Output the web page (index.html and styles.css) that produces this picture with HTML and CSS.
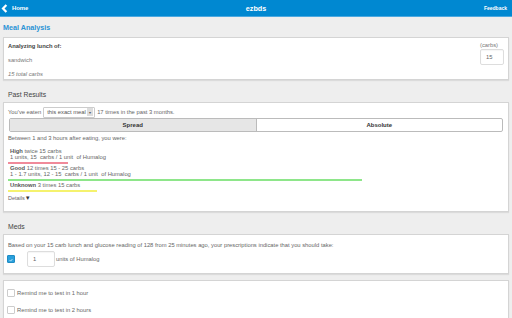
FILE: index.html
```html
<!DOCTYPE html>
<html>
<head>
<meta charset="utf-8">
<link rel="stylesheet" href="styles.css">
</head>
<body>
<header class="topbar">
  <a class="back"><svg class="chev" width="7" height="9" viewBox="0 0 7 9"><path d="M5.4 0.9 L2 4.5 L5.4 8.1" fill="none" stroke="#fff" stroke-width="2.2"/></svg>Home</a>
  <div class="title">ezbds</div>
  <a class="feedback">Feedback</a>
</header>
<main class="page">
  <h1 class="page-title">Meal Analysis</h1>
  <section class="card meal">
    <div class="meal-info">
      <div class="bold">Analyzing lunch of:</div>
      <div class="muted">sandwich</div>
      <div class="muted italic">15 total carbs</div>
    </div>
    <div class="carbs">
      <div class="muted">(carbs)</div>
      <div class="field carbs-field">15</div>
    </div>
  </section>

  <h2 class="section-title">Past Results</h2>
  <section class="card results">
    <div class="eaten">You've eaten <span class="select">this exact meal<span class="sel-arrow">&#9662;</span></span> 17 times in the past 3 months.</div>
    <div class="segmented">
      <div class="seg active">Spread</div>
      <div class="seg">Absolute</div>
    </div>
    <div class="between">Between 1 and 3 hours after eating, you were:</div>
    <div class="outcome first">
      <div><b>High</b> twice 15 carbs</div>
      <div>1 units, 15&nbsp; carbs / 1 unit&nbsp; of Humalog</div>
      <div class="bar red" style="width:60px"></div>
    </div>
    <div class="outcome">
      <div><b>Good</b> 12 times 15 - 25 carbs</div>
      <div>1 - 1.7 units, 12 - 15&nbsp; carbs / 1 unit&nbsp; of Humalog</div>
      <div class="bar green" style="width:354px"></div>
    </div>
    <div class="outcome">
      <div><b>Unknown</b> 3 times 15 carbs</div>
      <div class="bar yellow" style="width:89px"></div>
    </div>
    <div class="details">Details<span class="tri">&#9660;</span></div>
  </section>

  <h2 class="section-title">Meds</h2>
  <section class="card meds">
    <div class="based">Based on your 15 carb lunch and glucose reading of 128 from 25 minutes ago, your prescriptions indicate that you should take:</div>
    <div class="dose">
      <span class="check on"><svg width="8" height="8" viewBox="0 0 8 8"><path d="M2.2 4.2 L3.5 5.5 L5.8 2.8" fill="none" stroke="#fff" stroke-width="0.9"/></svg></span>
      <span class="field dose-field">1</span>
      <span>units of Humalog</span>
    </div>
  </section>

  <section class="card reminders">
    <div class="remind"><span class="check"></span>Remind me to test in 1 hour</div>
    <div class="remind"><span class="check"></span>Remind me to test in 2 hours</div>
  </section>
</main>
</body>
</html>
```
FILE: styles.css
```css
* { box-sizing: border-box; }
html, body { margin: 0; padding: 0; }
body {
  background: #eeeeee;
  font-family: "Liberation Sans", Arial, sans-serif;
  font-size: 5.8px;
  color: #666;
  width: 512px;
  height: 318px;
  overflow: hidden;
}
.topbar {
  height: 17px;
  background: #0088d1;
  border-bottom: 1px solid #4aa8e0;
  display: flex;
  align-items: center;
  justify-content: space-between;
  padding: 0 5px 0 1px;
  color: #fff;
  position: relative;
}
.back { display: flex; align-items: center; font-weight: bold; font-size: 5.9px; color: #fff; gap: 4px; }
.chev { display: block; }
.title {
  position: absolute; left: 0; right: 0; text-align: center;
  font-weight: bold; font-size: 7.2px; pointer-events: none;
}
.feedback { font-size: 5px; font-weight: bold; color: #fff; }
.page { padding: 0 3px 0 3px; }
.page-title {
  margin: 0; font-size: 7.2px; color: #2a93d5; font-weight: bold;
  padding: 6px 0 0 0; height: 20px;
}
.card {
  background: #fff;
  border: 1px solid #d4d4d4;
  box-shadow: 0 1px 1px rgba(0,0,0,0.08);
  padding: 4px 4px;
}
.meal { display: flex; justify-content: space-between; height: 43px; }
.meal-info div { height: 14px; line-height: 8px; }
.bold { font-weight: bold; color: #444; }
.muted { color: #777; }
.italic { font-style: italic; }
.carbs { display: flex; flex-direction: column; }
.carbs .muted { line-height: 7px; margin-bottom: 0; }
.field {
  display: inline-flex; align-items: center;
  border: 1px solid #ddd; border-radius: 2px;
  box-shadow: inset 0 1px 1px rgba(0,0,0,0.04);
  color: #666; background: #fff;
}
.carbs-field { width: 24px; height: 16px; padding-left: 5px; }
.section-title {
  margin: 0; font-size: 6.8px; font-weight: normal; color: #444;
  padding: 11px 0 0 5px; height: 22px;
}
.results { height: 110px; padding: 3px 4px; }
.eaten { display: flex; align-items: center; height: 12px; }
.select {
  display: inline-flex; align-items: center; justify-content: space-between;
  border: 1px solid #ccc; border-radius: 1px; height: 11px; width: 52px;
  margin: 0 2px 0 2px; padding-left: 3px; padding-right: 1px; color: #555;
}
.sel-arrow {
  font-size: 4px; background: #ddd; height: 8px; width: 6px;
  display: inline-flex; align-items: center; justify-content: center; color: #555;
}
.segmented {
  display: flex; margin: 0 0 0 1px; width: 494px; height: 14px;
  border: 1px solid #bbb; border-radius: 2px; overflow: hidden;
}
.seg { flex: 1; display: flex; align-items: center; justify-content: center; font-weight: bold; color: #333; font-size: 6px; }
.seg.active { background: #e6e6e6; border-right: 1px solid #bbb; }
.between { margin-top: 3px; line-height: 7px; }
.outcome { padding: 0 2px; line-height: 6px; margin-top: 1px; }
.outcome.first { margin-top: 6px; }
.outcome b { color: #555; }
.bar { height: 2px; margin: 2px 0 0 -2px; }
.red { background: #f08a9a; }
.green { background: #8ee68a; }
.yellow { background: #f5f26e; }
.details { margin-top: 3px; color: #666; font-size: 5.5px; }
.tri { color: #333; font-size: 6px; }
.meds { height: 40px; padding: 6px 3px; }
.based { line-height: 8px; padding-left: 1px; }
.dose { display: flex; align-items: center; margin-top: 2px; }
.check {
  display: inline-flex; width: 8px; height: 8px; border: 1px solid #ccc;
  border-radius: 1px; margin-right: 2px; background: #fff;
}
.check.on { background: #2aa0dc; border-color: #1f8cc4; }
.dose .check { margin-right: 12px; }
.dose-field { width: 28px; height: 16px; padding-left: 5px; margin-right: 1px; }
.reminders { margin-top: 6px; height: 60px; padding: 3px 3px; }
.remind { display: flex; align-items: center; height: 17px; color: #666; }
```
